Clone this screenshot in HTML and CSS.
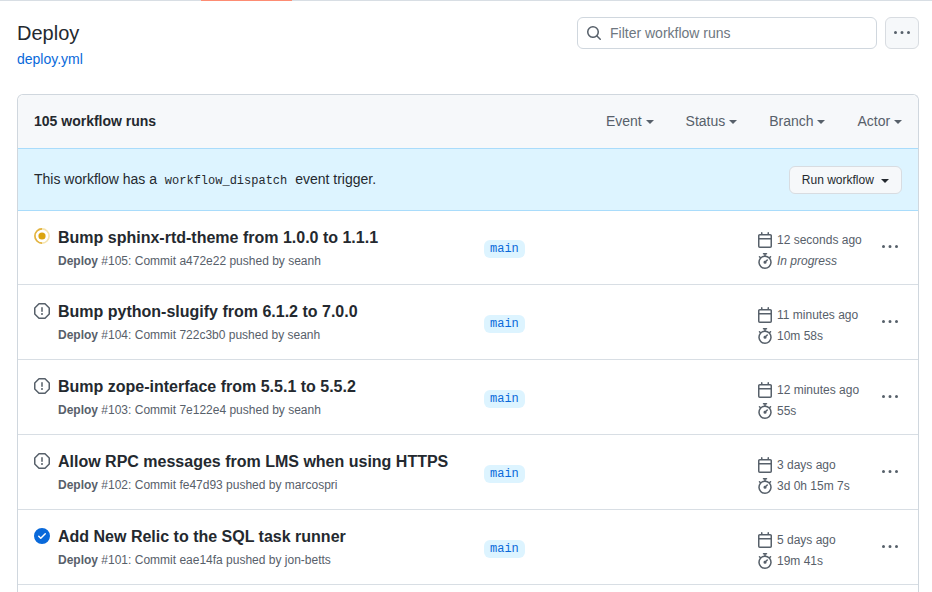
FILE: index.html
```html
<!DOCTYPE html>
<html>

<head>
	<meta charset='utf-8'>
	<title>Deploy</title>
	<link rel="stylesheet" href="styles.css">
</head>

<body>
	<svg class="sprites" width="0" height="0">
		<symbol id="i-search" viewBox="0 0 16 16"><path d="M10.68 11.74a6 6 0 0 1-7.922-8.982 6 6 0 0 1 8.982 7.922l3.04 3.04a.749.749 0 0 1-.326 1.275.749.749 0 0 1-.734-.215ZM11.5 7a4.499 4.499 0 1 0-8.997 0A4.499 4.499 0 0 0 11.5 7Z"/></symbol>
		<symbol id="i-kebab" viewBox="0 0 16 16"><path d="M8 9a1.5 1.5 0 1 0 0-3 1.5 1.5 0 0 0 0 3ZM1.5 9a1.5 1.5 0 1 0 0-3 1.5 1.5 0 0 0 0 3Zm13 0a1.5 1.5 0 1 0 0-3 1.5 1.5 0 0 0 0 3Z"/></symbol>
		<symbol id="i-calendar" viewBox="0 0 16 16"><path d="M4.75 0a.75.75 0 0 1 .75.75V2h5V.75a.75.75 0 0 1 1.5 0V2h1.25c.966 0 1.75.784 1.75 1.75v10.5A1.75 1.75 0 0 1 13.25 16H2.75A1.75 1.75 0 0 1 1 14.25V3.75C1 2.784 1.784 2 2.75 2H4V.75A.75.75 0 0 1 4.75 0ZM2.5 7.5v6.75c0 .138.112.25.25.25h10.5a.25.25 0 0 0 .25-.25V7.5Zm10.75-4H2.75a.25.25 0 0 0-.25.25V6h11V3.75a.25.25 0 0 0-.25-.25Z"/></symbol>
		<symbol id="i-stopwatch" viewBox="0 0 16 16"><path d="M5.75.75A.75.75 0 0 1 6.5 0h3a.75.75 0 0 1 0 1.5h-.75v1l-.001.041a6.724 6.724 0 0 1 3.464 1.435l.007-.006.75-.75a.749.749 0 0 1 1.275.326.749.749 0 0 1-.215.734l-.75.75-.006.007a6.75 6.75 0 1 1-10.548 0L2.72 5.03l-.75-.75a.751.751 0 0 1 .018-1.042.751.751 0 0 1 1.042-.018l.75.75.007.006A6.72 6.72 0 0 1 7.25 2.541V1.5H6.5a.75.75 0 0 1-.75-.75ZM8 14.5a5.25 5.25 0 1 0-.001-10.501A5.25 5.25 0 0 0 8 14.5Zm.389-6.7 1.33-1.33a.75.75 0 1 1 1.061 1.06L9.45 8.861A1.503 1.503 0 0 1 8 10.75a1.499 1.499 0 1 1 .389-2.95Z"/></symbol>
		<symbol id="i-stop" viewBox="0 0 16 16"><path d="M4.47.22A.749.749 0 0 1 5 0h6c.199 0 .389.079.53.22l4.25 4.25c.141.14.22.331.22.53v6a.749.749 0 0 1-.22.53l-4.25 4.25A.749.749 0 0 1 11 16H5a.749.749 0 0 1-.53-.22L.22 11.53A.749.749 0 0 1 0 11V5c0-.199.079-.389.22-.53Zm.84 1.28L1.5 5.31v5.38l3.81 3.81h5.38l3.81-3.81V5.31L10.69 1.5ZM8 4a.75.75 0 0 1 .75.75v3.5a.75.75 0 0 1-1.5 0v-3.5A.75.75 0 0 1 8 4Zm0 8a1 1 0 1 1 0-2 1 1 0 0 1 0 2Z"/></symbol>
		<symbol id="i-check" viewBox="0 0 16 16"><path d="M8 16A8 8 0 1 1 8 0a8 8 0 0 1 0 16Zm3.78-9.72a.751.751 0 0 0-.018-1.042.751.751 0 0 0-1.042-.018L6.75 9.19 5.28 7.72a.751.751 0 0 0-1.042.018.751.751 0 0 0-.018 1.042l2 2a.75.75 0 0 0 1.06 0Z"/></symbol>
		<symbol id="i-progress" viewBox="0 0 16 16"><circle cx="8" cy="8" r="7.1" fill="none" stroke="#f5e3ac" stroke-width="1.6"/><path d="M8 .9a7.1 7.1 0 0 0 0 14.2" fill="none" stroke="#e3b341" stroke-width="1.6"/><circle cx="8" cy="8" r="3.6" fill="#dba40e"/></symbol>
	</svg>

	<div class="top-line"><div class="tab-line"></div></div>

	<div class="page">
		<header class="page-head">
			<div class="page-title">
				<h1>Deploy</h1>
				<a href="#">deploy.yml</a>
			</div>
			<div class="page-tools">
				<label class="filter">
					<svg class="icon filter-icon"><use href="#i-search"/></svg>
					<input type="text" placeholder="Filter workflow runs">
				</label>
				<button class="btn btn-kebab"><svg class="icon"><use href="#i-kebab"/></svg></button>
			</div>
		</header>

		<section class="runs">
			<div class="runs-head">
				<strong>105 workflow runs</strong>
				<nav class="runs-filters">
					<span class="filter-menu">Event <i class="caret"></i></span>
					<span class="filter-menu">Status <i class="caret"></i></span>
					<span class="filter-menu">Branch <i class="caret"></i></span>
					<span class="filter-menu">Actor <i class="caret"></i></span>
				</nav>
			</div>

			<div class="dispatch">
				<p>This workflow has a <code>workflow_dispatch</code> event trigger.</p>
				<button class="btn btn-run">Run workflow <i class="caret"></i></button>
			</div>

			<div class="run">
				<svg class="icon run-status"><use href="#i-progress"/></svg>
				<div class="run-main">
					<a class="run-title" href="#">Bump sphinx-rtd-theme from 1.0.0 to 1.1.1</a>
					<div class="run-sub"><b>Deploy</b> #105: Commit a472e22 pushed by seanh</div>
				</div>
				<div class="run-branch"><span class="branch">main</span></div>
				<div class="run-times">
					<div class="run-time"><svg class="icon"><use href="#i-calendar"/></svg>12 seconds ago</div>
					<div class="run-time"><svg class="icon"><use href="#i-stopwatch"/></svg><em>In progress</em></div>
				</div>
				<svg class="icon run-kebab"><use href="#i-kebab"/></svg>
			</div>

			<div class="run">
				<svg class="icon run-status"><use href="#i-stop"/></svg>
				<div class="run-main">
					<a class="run-title" href="#">Bump python-slugify from 6.1.2 to 7.0.0</a>
					<div class="run-sub"><b>Deploy</b> #104: Commit 722c3b0 pushed by seanh</div>
				</div>
				<div class="run-branch"><span class="branch">main</span></div>
				<div class="run-times">
					<div class="run-time"><svg class="icon"><use href="#i-calendar"/></svg>11 minutes ago</div>
					<div class="run-time"><svg class="icon"><use href="#i-stopwatch"/></svg>10m 58s</div>
				</div>
				<svg class="icon run-kebab"><use href="#i-kebab"/></svg>
			</div>

			<div class="run">
				<svg class="icon run-status"><use href="#i-stop"/></svg>
				<div class="run-main">
					<a class="run-title" href="#">Bump zope-interface from 5.5.1 to 5.5.2</a>
					<div class="run-sub"><b>Deploy</b> #103: Commit 7e122e4 pushed by seanh</div>
				</div>
				<div class="run-branch"><span class="branch">main</span></div>
				<div class="run-times">
					<div class="run-time"><svg class="icon"><use href="#i-calendar"/></svg>12 minutes ago</div>
					<div class="run-time"><svg class="icon"><use href="#i-stopwatch"/></svg>55s</div>
				</div>
				<svg class="icon run-kebab"><use href="#i-kebab"/></svg>
			</div>

			<div class="run">
				<svg class="icon run-status"><use href="#i-stop"/></svg>
				<div class="run-main">
					<a class="run-title" href="#">Allow RPC messages from LMS when using HTTPS</a>
					<div class="run-sub"><b>Deploy</b> #102: Commit fe47d93 pushed by marcospri</div>
				</div>
				<div class="run-branch"><span class="branch">main</span></div>
				<div class="run-times">
					<div class="run-time"><svg class="icon"><use href="#i-calendar"/></svg>3 days ago</div>
					<div class="run-time"><svg class="icon"><use href="#i-stopwatch"/></svg>3d 0h 15m 7s</div>
				</div>
				<svg class="icon run-kebab"><use href="#i-kebab"/></svg>
			</div>

			<div class="run">
				<svg class="icon run-status passed"><use href="#i-check"/></svg>
				<div class="run-main">
					<a class="run-title" href="#">Add New Relic to the SQL task runner</a>
					<div class="run-sub"><b>Deploy</b> #101: Commit eae14fa pushed by jon-betts</div>
				</div>
				<div class="run-branch"><span class="branch">main</span></div>
				<div class="run-times">
					<div class="run-time"><svg class="icon"><use href="#i-calendar"/></svg>5 days ago</div>
					<div class="run-time"><svg class="icon"><use href="#i-stopwatch"/></svg>19m 41s</div>
				</div>
				<svg class="icon run-kebab"><use href="#i-kebab"/></svg>
			</div>
		</section>
	</div>
</body>

</html>
```

FILE: styles.css
```css
html {
	overflow: hidden;
}
body {
	margin: 0;
	color: #24292f;
	background: white;
	font: 14px/20px "Liberation Sans", Arial, sans-serif;
}
.sprites {
	position: absolute;
}
.icon {
	width: 16px;
	height: 16px;
	fill: currentColor;
	flex: none;
}
.top-line {
	height: 1px;
	background: #d8dee4;
}
.tab-line {
	width: 91px;
	height: 1px;
	margin-left: 201px;
	background: #fd8c73;
}
.page {
	padding: 16px 13px 0 17px;
}
a {
	color: #0969da;
	text-decoration: none;
}

/* header */
.page-head {
	display: flex;
	justify-content: space-between;
	height: 77px;
}
.page-title h1 {
	margin: 0;
	font-size: 20px;
	font-weight: 400;
	line-height: 32px;
}
.page-title a {
	display: block;
}
.page-tools {
	display: flex;
	gap: 8px;
	align-items: flex-start;
}
.filter {
	display: flex;
	align-items: center;
	gap: 8px;
	box-sizing: border-box;
	width: 300px;
	height: 32px;
	padding-left: 8px;
	border: 1px solid #d0d7de;
	border-radius: 6px;
	background: white;
}
.filter-icon {
	color: #57606a;
}
.filter input {
	flex: 1;
	min-width: 0;
	border: 0;
	padding: 0;
	outline: 0;
	font: inherit;
	color: inherit;
}
.filter input::placeholder {
	color: #6e7781;
	opacity: 1;
}
.btn {
	box-sizing: border-box;
	border: 1px solid #d8dce1;
	border-radius: 6px;
	background: #f6f8fa;
	color: #24292f;
	font-family: inherit;
}
.btn-kebab {
	display: flex;
	align-items: center;
	justify-content: center;
	width: 34px;
	height: 32px;
	padding: 0;
	color: #57606a;
}

/* runs box */
.runs {
	border: 1px solid #d0d7de;
	border-bottom: 0;
	border-radius: 6px 6px 0 0;
	padding-bottom: 20px;
}
.runs-head {
	display: flex;
	justify-content: space-between;
	align-items: center;
	box-sizing: border-box;
	height: 53px;
	padding: 0 16px 1px;
	background: #f6f8fa;
	border-radius: 6px 6px 0 0;
}
.runs-filters {
	display: flex;
	gap: 32px;
	color: #57606a;
}
.filter-menu {
	white-space: nowrap;
}
.caret {
	display: inline-block;
	vertical-align: middle;
	border-top: 4px solid;
	border-left: 4px solid transparent;
	border-right: 4px solid transparent;
}
.dispatch {
	display: flex;
	justify-content: space-between;
	align-items: center;
	box-sizing: border-box;
	height: 63px;
	padding: 1px 16px 0;
	background: #ddf4ff;
	border-top: 1px solid #a9dcfb;
	border-bottom: 1px solid #a9dcfb;
}
.dispatch p {
	margin: 0 0 2px;
}
.dispatch code {
	margin: 0 4px;
	font: 12px "Liberation Mono", monospace;
}
.btn-run {
	height: 28px;
	width: 113px;
	padding: 0;
	font-size: 12px;
}
.btn-run .caret {
	margin-left: 4px;
}

/* one row per workflow run */
.run {
	display: grid;
	grid-template-columns: 24px 426px 273px 1fr 16px;
	box-sizing: border-box;
	height: 75px;
	padding: 17px 20px 0 16px;
	border-bottom: 1px solid #d8dee4;
}
.dispatch + .run {
	height: 74px;
	padding-top: 16px;
}
.dispatch + .run .run-main {
	margin-top: 1px;
}
.run-status {
	margin-top: 1px;
	color: #57606a;
}
.run-status.passed {
	color: #0969da;
}
.run-title {
	display: block;
	color: #24292f;
	font-size: 16px;
	font-weight: 700;
	line-height: 20px;
}
.run-sub {
	margin-top: 4px;
	font-size: 12px;
	line-height: 18px;
	color: #57606a;
}
.run-branch {
	padding-top: 10px;
}
.branch {
	display: inline-block;
	padding: 0 6px;
	border-radius: 6px;
	background: #ddf4ff;
	color: #0969da;
	font: 12px/18px "Liberation Mono", monospace;
}
.run-times {
	display: flex;
	flex-direction: column;
	gap: 3px;
	padding-top: 4px;
	color: #57606a;
	font-size: 12px;
	line-height: 18px;
}
.run-time {
	display: flex;
	align-items: center;
	gap: 4px;
}
.run-kebab {
	margin-top: 12px;
	color: #57606a;
}
```
